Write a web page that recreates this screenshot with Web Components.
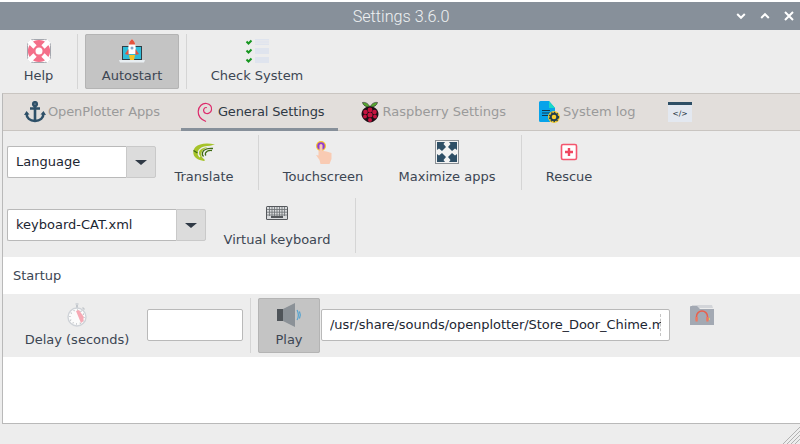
<!DOCTYPE html>
<html lang="en"><head><meta charset="utf-8"><title>Settings 3.6.0</title>
<style>
html,body{margin:0;padding:0;width:800px;height:444px;overflow:hidden;background:#fff;font-family:"DejaVu Sans",sans-serif;font-size:13px;color:#3c4653}
svg{display:block}
</style></head><body>
<op-app>
  <op-titlebar heading="Settings 3.6.0"></op-titlebar>
  <op-row kind="tool">
    <op-tool label="Help" style="--w:77px">
      <svg width="24" height="24" viewBox="0 0 24 24"><rect x=".5" y=".5" width="23" height="23" rx="6" fill="#fff" stroke="#a4a7ae"/><circle cx="12" cy="12" r="7.300" fill="none" stroke="#f4708a" stroke-width="7.600"/><path d="M2 2l6 6M22 2l-6 6M2 22l6-6M22 22l-6-6" stroke="#fff" stroke-width="4.600"/><path d="M4 12h3M17 12h3M12 4v3M12 17v3" stroke="#f4708a" stroke-width="4"/></svg>
    </op-tool>
    <op-sep></op-sep>
    <op-tool label="Autostart" active style="--w:94px;margin-left:7px">
      <svg width="26" height="24" viewBox="0 0 26 24"><path d="M3 7h20v14H3z" fill="#2f3e46"/><path d="M4 8h18v12H4z" fill="#2fbcd8"/><path d="M0 21h26l-1 2.500H1z" fill="#e8eef2"/><path d="M13 0c3.500 3 4.200 8 3.600 15H9.400C8.800 8 9.500 3 13 0z" fill="#fff"/><path d="M13 0c1.700 1.500 2.800 3 3.200 5.500H9.800C10.200 3 11.300 1.500 13 0z" fill="#e5533d"/><path d="M9.500 10l-3.500 5 3.500 1zM16.500 10l3.500 5-3.500 1z" fill="#e5533d"/><path d="M10 16h6l-1 5h-4z" fill="#f7c325"/><circle cx="13" cy="9" r="1.500" fill="#8aa8cc"/></svg>
    </op-tool>
    <op-sep style="margin-left:7px"></op-sep>
    <op-tool label="Check System" style="--w:140px">
      <svg width="24" height="24" viewBox="0 0 24 24"><g fill="#dfe4ee"><path d="M10 0h14v1.500H10zM10 2.300h14v1.400H10zM10 4.500h14V6H10z"/><path d="M10 9h14v6H10zM10 18h14v6H10z"/></g><g fill="none" stroke="#16961f" stroke-width="2"><path d="M1.500 2.500l2 2 3-3M1.500 11.500l2 2 3-3M1.500 20.500l2 2 3-3"/></g></svg>
    </op-tool>
  </op-row>
  <op-frame>
    <op-tabs>
      <op-tab label="OpenPlotter Apps" muted style="--l:21px;--r:21px;--g:2px;--ls:-.13px">
        <svg width="22" height="22" viewBox="0 0 22 22"><g fill="none" stroke="#2e5068" stroke-width="2.600"><circle cx="11" cy="3" r="1.800"/><path d="M11 5v15M6 7.500h10"/><path d="M2.500 12c0 5 3.500 8 8.500 8s8.500-3 8.500-8"/></g><path d="M0 14l2.500-4 3 3.500zM22 14l-2.500-4-3 3.500z" fill="#2e5068"/></svg>
      </op-tab>
      <op-tab label="General Settings" active style="--l:16px;--r:13px;--g:5px;--ls:-.13px">
        <svg width="16" height="22" viewBox="0 0 16 22"><path d="M9 20.500C4 18.500 1 15 1.200 10.500 1.500 5 5.500 2 9.500 2.500c3.700.5 5.500 3.300 5 6.300-.5 2.700-3 4.200-5.300 3.700-2.200-.5-3-2.500-2.400-4.200.5-1.300 1.800-2 3-1.700" fill="none" stroke="#dd2a6b" stroke-width="1.200"/></svg>
      </op-tab>
      <op-tab label="Raspberry Settings" muted style="--l:23px;--r:33px;--g:4px">
        <svg width="18" height="22" viewBox="0 0 18 22"><path d="M9 6C7 2 4 1 1.500 1.500 2 4 5 6.500 9 6zM9 6c2-4 5-5 7.500-4.500C16 4 13 6.500 9 6z" fill="#55a630" stroke="#222" stroke-width=".6"/><path d="M9 5.500c5 0 8.500 3.500 8.500 7.500S13 21.500 9 21.500.5 17 .5 13 4 5.500 9 5.500z" fill="#1d1016"/><g fill="#c5133f"><circle cx="9" cy="9" r="2.400"/><circle cx="4.500" cy="11" r="2.300"/><circle cx="13.500" cy="11" r="2.300"/><circle cx="9" cy="14" r="2.500"/><circle cx="4" cy="15.500" r="1.900"/><circle cx="14" cy="15.500" r="1.900"/><circle cx="9" cy="19" r="2"/></g></svg>
      </op-tab>
      <op-tab label="System log" muted style="--l:0;--r:32px;--g:3px">
        <svg width="21" height="22" viewBox="0 0 21 22"><path d="M0 1.500A1.500 1.500 0 0 1 1.500 0H10l6 7v13a1 1 0 0 1-1 1H1.500A1.500 1.500 0 0 1 0 19.500z" fill="#07a3ea"/><path d="M10 0l6 7h-6z" fill="#19d8c6"/><path d="M3 9h8v1H3zM3 11.500h8v1H3zM3 14h6v1H3z" fill="#123a52"/><circle cx="15" cy="16" r="6" fill="#f8cf2e"/><circle cx="15" cy="16" r="3.300" fill="none" stroke="#24404f" stroke-width="2"/><circle cx="15" cy="16" r="4.600" fill="none" stroke="#24404f" stroke-width="1.200" stroke-dasharray="1.500 1.500"/></svg>
      </op-tab>
      <op-tab style="--l:0;--r:0;--g:0">
        <svg width="24" height="20" viewBox="0 0 24 20"><rect width="24" height="20" fill="#e3e8f0"/><rect width="24" height="3" fill="#2e4f66"/><text x="12" y="14" text-anchor="middle" font-family="DejaVu Sans" font-size="7.500" fill="#24303c">&lt;/&gt;</text></svg>
      </op-tab>
    </op-tabs>
    <op-row>
      <op-combo value="Language" style="--w:119px;margin-left:4px"></op-combo>
      <op-tool label="Translate" style="--w:96px">
        <svg width="24" height="24" viewBox="0 0 24 24"><path d="M23 4.500C15 2.500 7 3.500 3.500 7 .5 10 .5 15 4 18c2.500 2 5 2.500 8 3 1 0 1-1 0-2-3-2-3.500-5-2-7.500C12 8 17 6 23 4.500z" fill="#a6c32a"/><g fill="none" stroke="#ededed" stroke-width="1.200"><path d="M22 6.500C15 5.500 8 7.500 6.500 11.500c-.7 2 0 4 1.500 5.500"/></g><g fill="none" stroke="#3f6b14" stroke-width="1.300"><path d="M21 8.500c-5-.5-9.500 1-10.500 4-.5 1.500 0 3 1 4"/><path d="M20 10.500c-3-.3-5.500.7-6.500 2.500-.4 1 0 2 .5 2.500"/><path d="M1.500 10.500l4 2.500"/></g></svg>
      </op-tool>
      <op-sep style="margin-left:6px"></op-sep>
      <op-tool label="Touchscreen" style="--w:128px">
        <svg width="24" height="24" viewBox="0 0 24 24"><path d="M7.500 6h5v5l3 .5 5 1.500v6l-2 5H9.500l-1-4-3.500-5 2.500.5z" fill="#f9cbb3"/><circle cx="10" cy="6" r="5" fill="#f5c22d"/><circle cx="10" cy="6" r="3.800" fill="#8f3fd0"/><path d="M8.500 5.500a1.500 1.500 0 0 1 3 0V11h-3z" fill="#f9cbb3"/></svg>
      </op-tool>
      <op-tool label="Maximize apps" style="--w:120px">
        <svg width="24" height="24" viewBox="0 0 24 24"><rect x=".5" y=".5" width="23" height="23" fill="#f2f2f2" stroke="#8a8f94"/><g fill="#2e4f66"><path d="M2 2h8l-1.500 2L11 7 7 11 4 8.500 2 10z"/><path d="M22 2h-8l1.500 2L13 7l4 4 3-2.500 2 1.500z"/><path d="M2 22h8l-1.500-2L11 17l-4-4-3 2.500L2 14z"/><path d="M22 22h-8l1.500-2L13 17l4-4 3 2.500 2-1.500z"/></g></svg>
      </op-tool>
      <op-sep style="margin-left:14px"></op-sep>
      <op-tool label="Rescue" style="--w:94px">
        <svg width="24" height="24" viewBox="0 0 24 24"><rect x="4.500" y="4.500" width="15" height="15" rx="1.500" fill="#fff" stroke="#f4566e" stroke-width="1.600"/><path d="M10.800 8h2.400v2.800H16v2.400h-2.800V16h-2.400v-2.800H8v-2.400h2.800z" fill="#ef4760"/></svg>
      </op-tool>
    </op-row>
    <op-row>
      <op-combo value="keyboard-CAT.xml" style="--w:169px;margin-left:4px"></op-combo>
      <op-tool label="Virtual keyboard" style="--w:142px">
        <svg width="24" height="24" viewBox="0 0 24 24"><rect x="1" y="3" width="22" height="14" rx="1.500" fill="#55585c"/><rect x="2" y="4" width="20" height="12" fill="#d9dbdd"/><path d="M2 6.500h20M2 9.200h20M2 12h20M4.500 4v9M7 4v9M9.500 4v9M12 4v9M14.500 4v9M17 4v9M19.500 4v9" stroke="#6b6e72" stroke-width=".8"/><rect x="6" y="13" width="12" height="2" fill="#55585c"/></svg>
      </op-tool>
      <op-sep style="margin-left:7px"></op-sep>
    </op-row>
    <op-heading>Startup</op-heading>
    <op-row>
      <op-tool label="Delay (seconds)" style="--w:136px;margin-left:6px">
        <svg width="24" height="24" viewBox="0 0 24 24"><path d="M10.500 0h3v2h-3z" fill="#d3d6da"/><path d="M11 2h2v3h-2zM18 4l2 2-1 1-2-2z" fill="#c3c7cc"/><circle cx="12" cy="14" r="9" fill="#fbfbfb" stroke="#cfd3d8" stroke-width="1.400"/><circle cx="12" cy="14" r="7" fill="none" stroke="#8f959c" stroke-width="1.200" stroke-dasharray=".7 2.970"/><path d="M11 8l3-1 4.500 6.500v4.500L16 20z" fill="#f6a9b4"/></svg>
      </op-tool>
      <op-input value="" style="--w:94px;margin-left:2px"></op-input>
      <op-sep style="margin-left:7px"></op-sep>
      <op-tool label="Play" active style="--w:62px;margin-left:7px">
        <svg width="26" height="24" viewBox="0 0 26 24"><path d="M1 6h6v12H1z" fill="#4f5459"/><path d="M7 6l12-6v24L7 18z" fill="#8b9197"/><path d="M21 7c1.800 2.500 1.800 7.500 0 10M23.500 8.500c1 2.200 1 4.800 0 7" fill="none" stroke="#4a9fd0" stroke-width="1.100"/></svg>
      </op-tool>
      <op-input clip value="/usr/share/sounds/openplotter/Store_Door_Chime.mp3" style="--w:347px;margin-left:1px"></op-input>
      <op-folder style="margin-left:20px"></op-folder>
    </op-row>
    <op-blank></op-blank>
  </op-frame>
  <op-status></op-status>
</op-app>
<script>
function def(name, css, html){
  customElements.define(name, class extends HTMLElement{
    constructor(){super();this.attachShadow({mode:'open'});}
    connectedCallback(){
      const get=k=>this.getAttribute(k)||'';
      this.shadowRoot.innerHTML='<style>'+css+'</style>'+(typeof html==='function'?html(get):html);
    }
  });
}
def('op-app',':host{display:flex;flex-direction:column;width:800px;height:444px;padding-top:2px;box-sizing:border-box;background:linear-gradient(#fff 2px,#ededed 2px)}','<slot></slot>');
def('op-titlebar',`:host{display:flex;align-items:center;justify-content:center;position:relative;height:28px;background:#87909a;color:#eef0f2;font:300 16.2px Roboto,sans-serif;flex:none;padding-left:2px}
.c{position:absolute;right:4px;top:0;height:28px;display:flex;align-items:center;gap:10px}
svg{display:block}`,
g=>`<span>${g('heading')}</span><div class="c">
<svg width="14" height="14" viewBox="0 0 14 14"><path d="M3.200 5l3.800 3.800L10.800 5" fill="none" stroke="#fff" stroke-width="2"/></svg>
<svg width="14" height="14" viewBox="0 0 14 14"><path d="M3.200 9L7 5.200 10.800 9" fill="none" stroke="#fff" stroke-width="2"/></svg>
<svg width="14" height="14" viewBox="0 0 14 14"><path d="M3 3l8 8M11 3l-8 8" fill="none" stroke="#fff" stroke-width="2"/></svg></div>`);
def('op-row',`:host{display:flex;align-items:flex-start;height:63px;box-sizing:border-box;padding:4px 0;flex:none;background:#ededed}`,'<slot></slot>');
def('op-tool',`:host{display:flex;flex-direction:column;align-items:center;width:var(--w);height:55px;box-sizing:border-box;padding-top:5px;flex:none;border-radius:2px;color:#3c4653;font:13px "DejaVu Sans",sans-serif}
:host([active]){background:#c4c4c4;outline:1px solid #b4b4b4;outline-offset:-1px}
.i{height:24px;display:flex;justify-content:center}
.l{margin-top:5px;line-height:16px;white-space:nowrap}`,
g=>`<div class="i"><slot></slot></div><div class="l">${g('label')}</div>`);
def('op-sep',':host{display:block;width:1px;height:55px;background:#d5d5d5;flex:none}','');
def('op-frame',`:host{display:flex;flex-direction:column;flex:1;margin-left:2px;border-left:1px solid #b9b9b9;border-top:1px solid #c9c5c1;border-bottom:1px solid #b9b9b9;background:#fff;min-height:0}`,'<slot></slot>');
def('op-tabs',`:host{display:flex;align-items:stretch;height:37px;box-sizing:border-box;background:#e2dedb;border-bottom:1px solid #c9c5c1;flex:none}`,'<slot></slot>');
def('op-tab',`:host{display:flex;align-items:center;gap:var(--g);padding:0 var(--r) 1px var(--l);height:36px;box-sizing:border-box;flex:none;color:#2f3945;font:13px "DejaVu Sans",sans-serif;position:relative}
:host([muted]){color:#9a9a9a}
:host([active])::after{content:"";position:absolute;left:0;right:0;bottom:-1px;height:3px;background:#87909a}
.l{white-space:nowrap;letter-spacing:var(--ls,0)}`,
g=>`<slot></slot>${g('label')?`<span class="l">${g('label')}</span>`:''}`);
def('op-combo',`:host{display:flex;margin-top:11px;flex:none;height:32px;font:13px "DejaVu Sans",sans-serif;color:#1c2632}
.v{width:var(--w);box-sizing:border-box;height:32px;background:#fff;border:1px solid #b9b9b9;border-right:0;border-radius:2px 0 0 2px;padding-left:8px;line-height:29px;white-space:nowrap}
.b{width:30px;box-sizing:border-box;height:32px;background:#dcdcdc;border:1px solid #c9c9c9;border-radius:0 2px 2px 0;display:flex;align-items:center;justify-content:center}
.b i{display:block;width:0;height:0;border:5px solid transparent;border-top:5.500px solid #2f3945;border-bottom:0;border-left-width:6px;border-right-width:6px}`,
g=>`<div class="v">${g('value')}</div><div class="b"><i></i></div>`);
def('op-input',`:host{display:block;margin-top:11px;flex:none;width:var(--w);background:#fff;border:1px solid #b9b9b9;border-radius:2px;height:30px;font:13px "DejaVu Sans",sans-serif;color:#1c2632;overflow:hidden;position:relative}
:host([clip])::after{content:"";position:absolute;left:338px;top:4px;height:22px;border-left:1px dashed #c4c4c4}
.v{position:absolute;left:8px;top:0;width:331px;overflow:hidden;line-height:29px;white-space:nowrap;letter-spacing:-.06px}`,
g=>`<div class="v">${g('value')}</div>`);
def('op-folder',':host{display:block;flex:none;width:24px;height:20px;margin-top:7px}',
`<svg width="24" height="20" viewBox="0 0 24 20" style="display:block"><path d="M2 0h20l1 3H2z" fill="#d3d5d9"/><path d="M0 2a1 1 0 0 1 1-1h6l3 3h14v16H0z" fill="#a3a9b3"/><path d="M6.500 15v-3.500a5.500 5.500 0 0 1 11 0V15" fill="none" stroke="#e8604c" stroke-width="1.500"/><rect x="5.500" y="12" width="2.200" height="4.500" fill="#f0775f"/><rect x="16.300" y="12" width="2.200" height="4.500" fill="#f0775f"/><rect x="19" y="13" width="1" height="2" fill="#c9d860"/></svg>`);
def('op-heading',`:host{display:flex;align-items:center;height:37px;padding-left:10px;background:#fff;color:#3c4653;flex:none;font:13px "DejaVu Sans",sans-serif}`,'<slot></slot>');
def('op-blank',':host{display:block;flex:1;background:#fff}','');
def('op-status',`:host{display:block;height:20px;background:#ededed;flex:none;position:relative}
svg{position:absolute;right:0;bottom:0;display:block}`,
`<svg width="20" height="20" viewBox="0 0 20 20"><path d="M20 3L3 20M20 7L7 20M20 11L11 20M20 15L15 20" stroke="#b2b2b2" stroke-width="1" fill="none"/></svg>`);
</script>
</body></html>
